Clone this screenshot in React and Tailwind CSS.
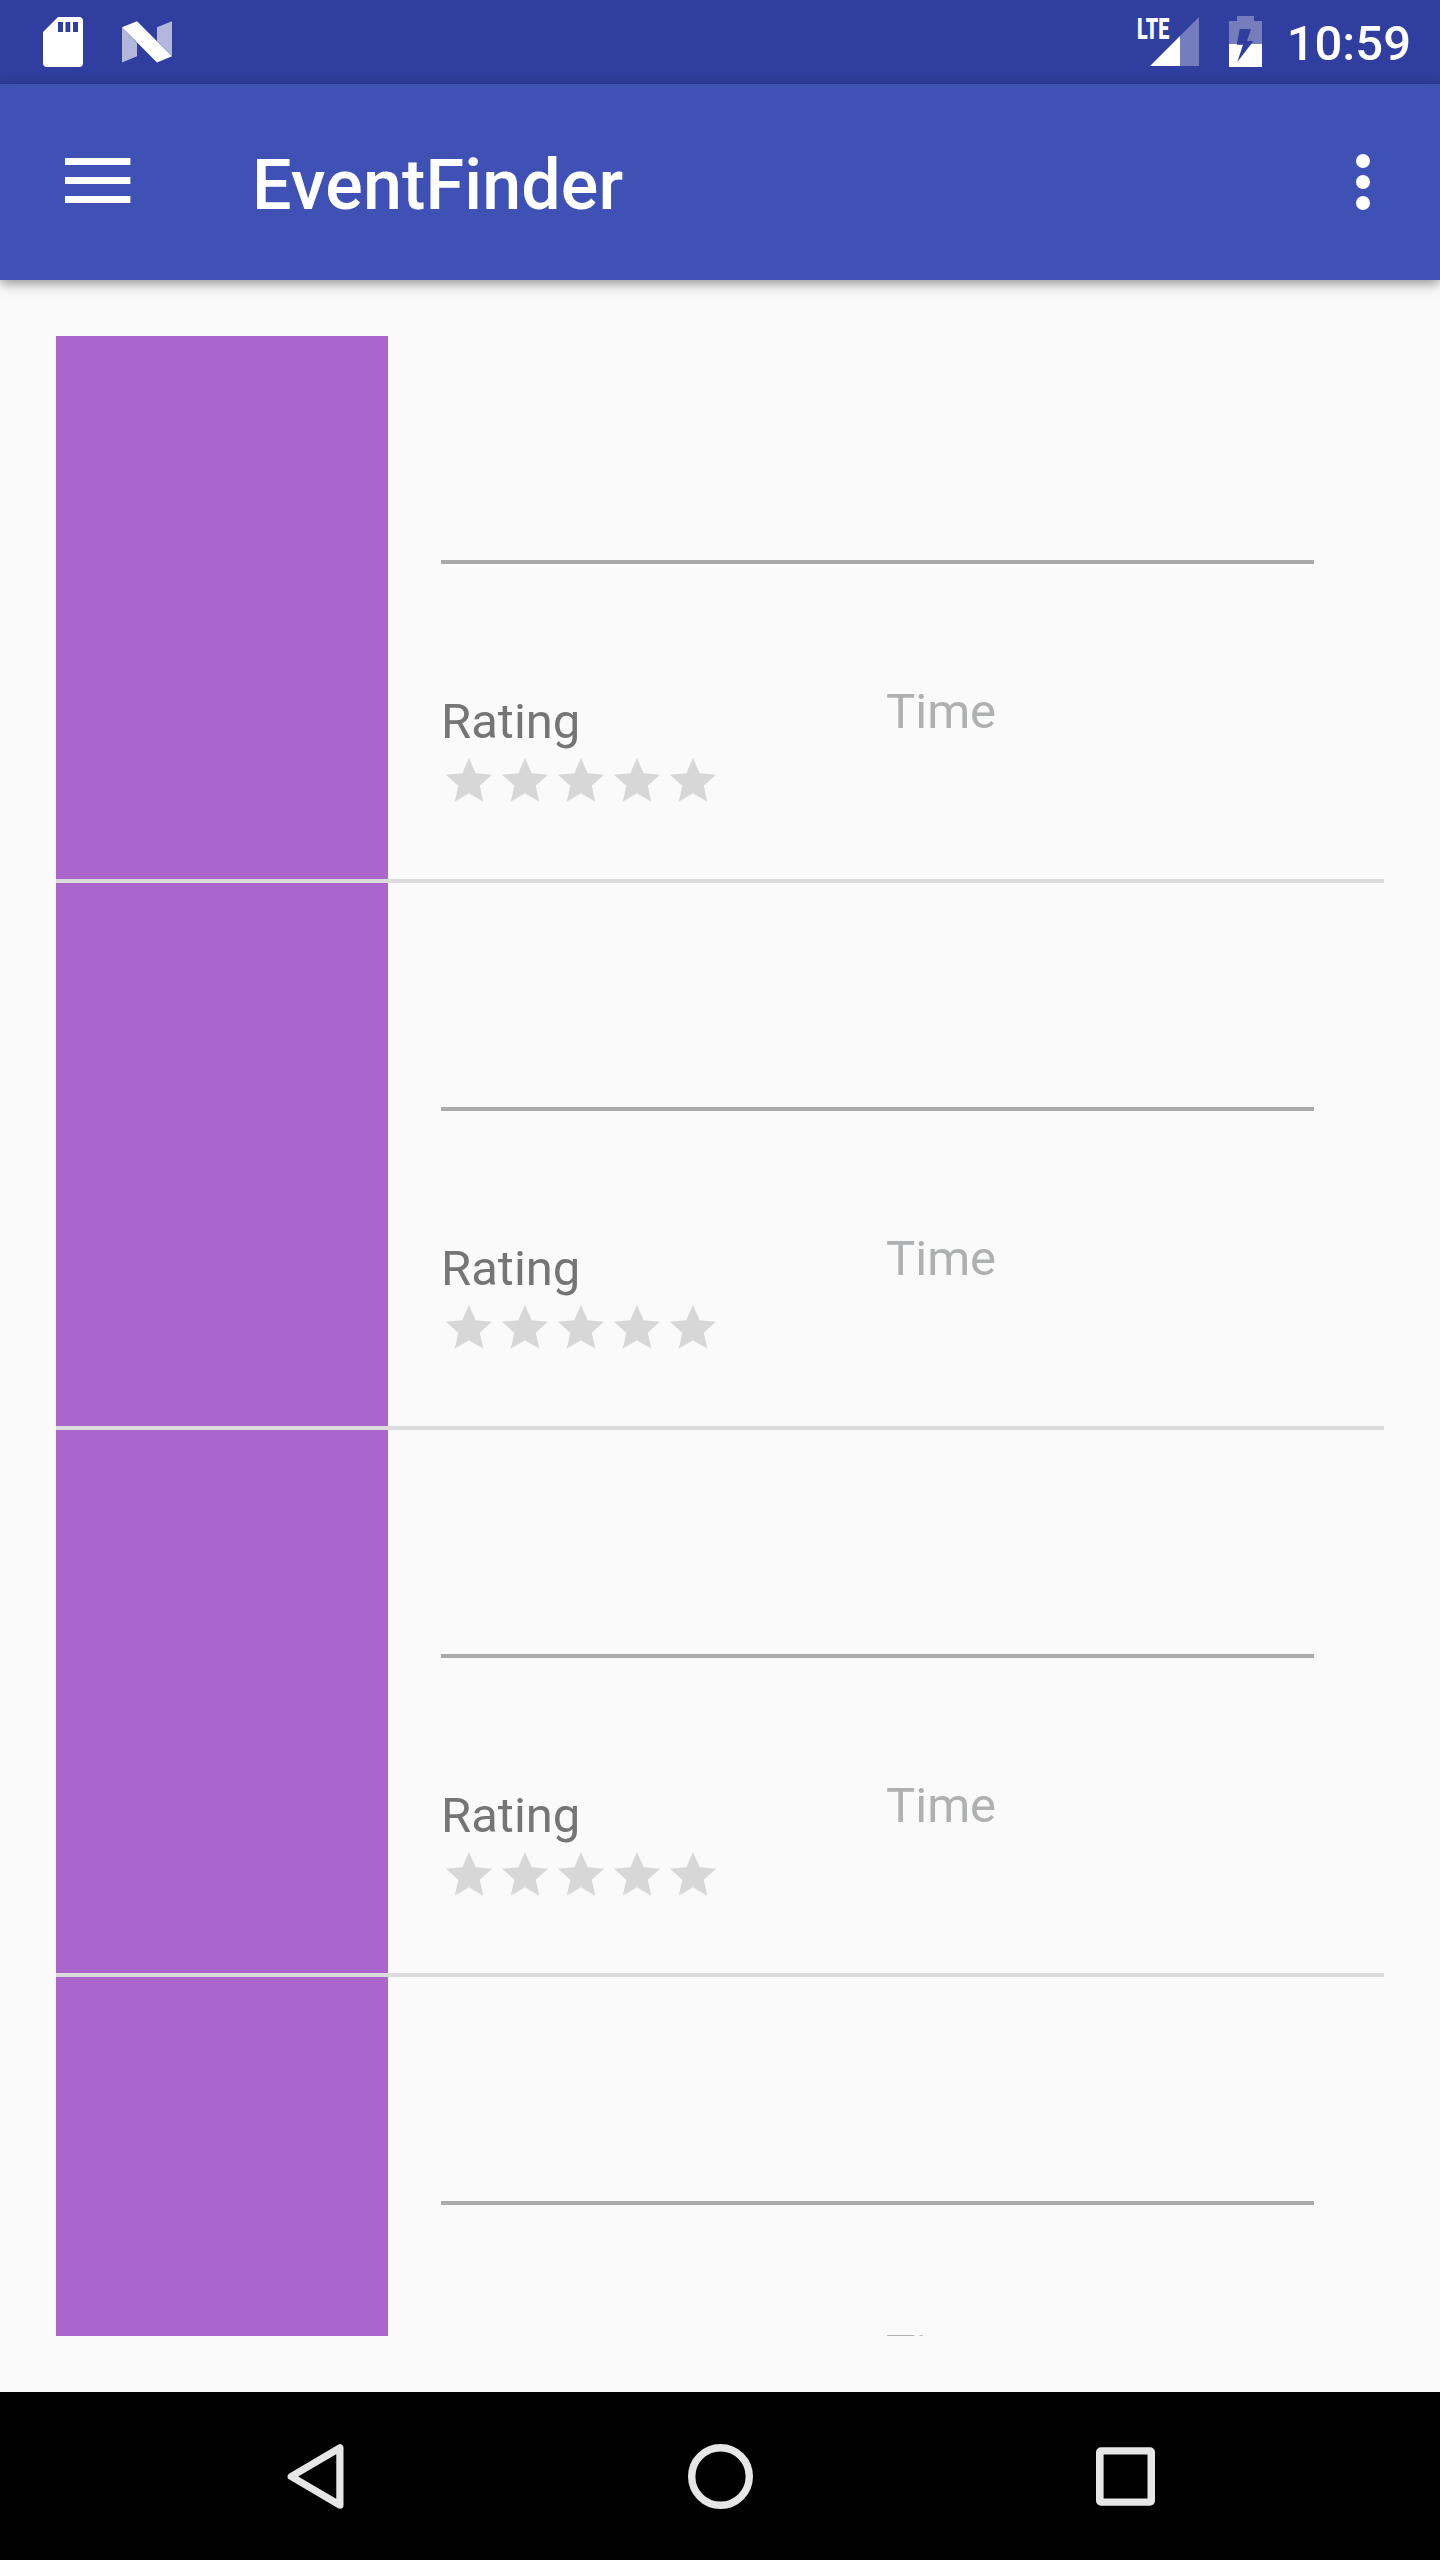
const STARS = [0, 1, 2, 3, 4];
const EVENTS = [0, 1, 2, 3];

function StatusBar() {
  return (
    <div className="flex h-[84px] shrink-0 bg-[#303f9f]">
      <svg className="ml-10 h-[84px] w-[140px]" viewBox="40 0 140 84">
        <path
          fill="#fff"
          fillRule="evenodd"
          d="M58 17H79a4 4 0 0 1 4 4V63a4 4 0 0 1-4 4H47a4 4 0 0 1-4-4V32ZM58 22V32H63V22ZM65.5 22V32H70.3V22ZM73 22V32H78V22Z"
        />
        <path fill="#b3b7dc" d="M122 27.3 137 43V56.2L122 62.6ZM157 27.3 172 21.3V56L157 41Z" />
        <path fill="#fff" d="M122 27.3 137 21.3 172 56.2 157 62.6Z" />
      </svg>
      <div className="ml-auto mr-[29px] flex">
        <span className="mt-[15px] h-7 w-[33px] origin-left scale-x-[0.68] whitespace-nowrap font-['Roboto'] text-[29px] leading-7 font-black text-white">LTE</span>
        <svg className="-ml-[22px] mr-[23px] h-[84px] w-[116px]" viewBox="1148 0 116 84">
          <path fill="#fff" d="M1150 66 1180 36V66Z" />
          <path fill="#757dbc" d="M1180 36 1199 17V66H1180Z" />
          <path fill="#757dbc" d="M1237 16H1254V21H1262V44H1229V21H1237Z" />
          <path fill="#fff" d="M1229 44H1262V67H1229Z" />
          <path fill="#303f9f" d="M1239.7 29H1251L1247 41H1253.5L1237.3 62 1243 44.7H1236.8Z" />
        </svg>
        <span className="mt-[15px] font-['Roboto'] text-[49px] leading-[57px] font-medium text-white">10:59</span>
      </div>
    </div>
  );
}

function AppBar() {
  return (
    <header className="relative z-10 flex h-[196px] shrink-0 bg-[#3f51b5] shadow-[0_3px_14px_rgba(0,0,0,0.3),0_4px_8px_rgba(0,0,0,0.15)]">
      <svg className="ml-[65px] mt-[73px] h-[48px] w-[66px]" viewBox="0 0 66 48" fill="#fff">
        <path d="M0 1h65.4v7H0zM0 20h65.4v7H0zM0 39h65.4v7H0z" />
      </svg>
      <h1 className="ml-[121px] mt-[60px] font-['Roboto'] text-[70px] leading-[82px] font-medium tracking-[0.15px] text-white">EventFinder</h1>
      <svg className="ml-auto mr-[69px] mt-[70px] h-[56px] w-4" viewBox="0 0 16 56" fill="#fff">
        <circle cx="8" cy="7" r="7" />
        <circle cx="8" cy="28" r="7" />
        <circle cx="8" cy="49" r="7" />
      </svg>
    </header>
  );
}

function Star() {
  return (
    <svg className="size-14" viewBox="0 0 56 56" fill="#d7d7d7">
      <path d="M28 4 34.7 19.2 51 20.7 38.7 31.7 42.3 47.8 28 39.3 13.7 47.8 17.3 31.7 5 20.7 21.3 19.2Z" />
    </svg>
  );
}

function EventRow() {
  return (
    <li className="flex h-[547px] shrink-0 border-b-4 border-[#dcdcdc]">
      <div className="w-[332px] bg-[#aa66cc]" />
      <div className="ml-[53px] w-[873px]">
        <div className="h-[228px] border-b-4 border-[#a9a9a9]" />
        <div className="flex font-['Roboto'] text-[49px] leading-[57px]">
          <div className="mt-[129px] w-[445px] text-[#757575]">
            <div>Rating</div>
            <div className="mt-[4px] flex">
              {STARS.map((s) => (
                <Star key={s} />
              ))}
            </div>
          </div>
          <div className="mt-[119px] text-[#afb0b1]">Time</div>
        </div>
      </div>
    </li>
  );
}

function NavBar() {
  return (
    <nav className="flex h-[168px] shrink-0 items-start bg-black">
      <svg className="ml-[280px] mt-[44px] h-20 w-20" viewBox="280 2436 80 80" fill="none" stroke="#e6e6e6" strokeWidth="7.2" strokeLinejoin="round">
        <path d="M291.2 2476.5 339.9 2447.8V2505.2Z" />
      </svg>
      <svg className="ml-[320px] mt-[44px] h-20 w-20" viewBox="680 2436 80 80" fill="none" stroke="#e6e6e6" strokeWidth="7.4">
        <circle cx="720.5" cy="2476.5" r="28.8" />
      </svg>
      <svg className="ml-[326px] mt-[44px] h-20 w-20" viewBox="1086 2436 80 80">
        <path
          fill="#e6e6e6"
          fillRule="evenodd"
          d="M1101 2447.3H1150a5 5 0 0 1 5 5V2500.7a5 5 0 0 1-5 5H1101a5 5 0 0 1-5-5V2452.3a5 5 0 0 1 5-5ZM1103.6 2454.5V2498.5H1147.5V2454.5Z"
        />
      </svg>
    </nav>
  );
}

export default function App() {
  return (
    <div className="flex h-[2560px] w-[1440px] flex-col overflow-hidden bg-[#fafafa]">
      <StatusBar />
      <AppBar />
      <main className="min-h-0 grow p-14">
        <ul className="flex h-[2000px] flex-col overflow-hidden">
          {EVENTS.map((e) => (
            <EventRow key={e} />
          ))}
        </ul>
      </main>
      <NavBar />
    </div>
  );
}
